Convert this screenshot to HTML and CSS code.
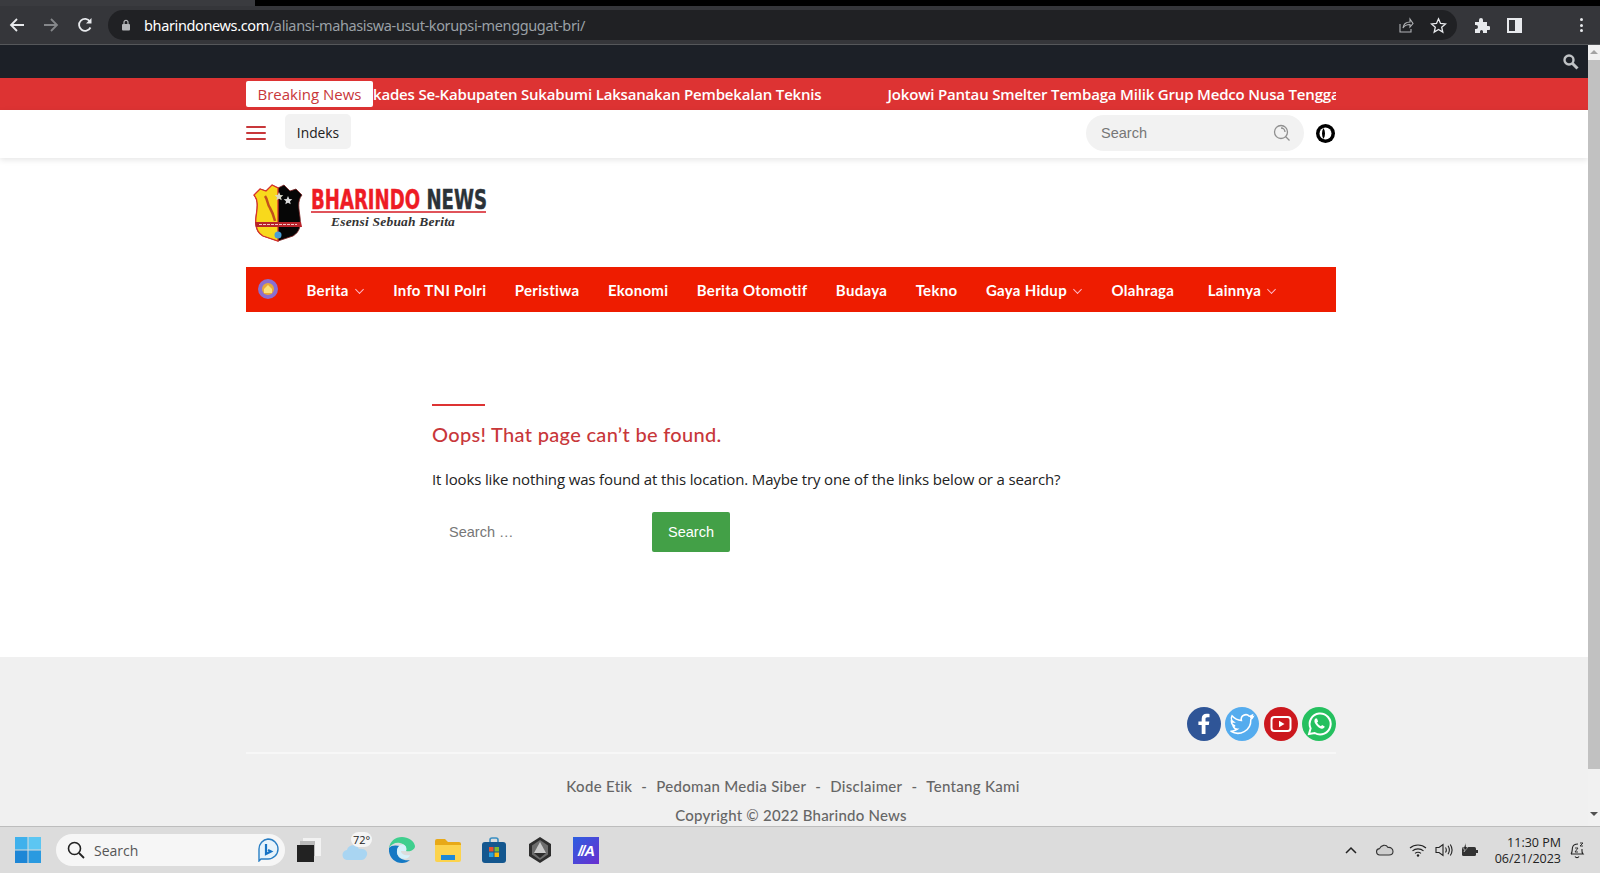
FILE: index.html
```html
<!DOCTYPE html>
<html lang="id">
<head>
    <meta charset="UTF-8">
    <meta name="viewport" content="width=device-width, initial-scale=1.0">
    <title>Bharindo News</title>
    <link rel="stylesheet" href="styles.css">
</head>
<body>
    <!-- browser -->
    <div class="tabstrip"><div class="tab-left"></div></div>
    <div class="toolbar">
        <svg class="tb-back" width="16" height="16" viewBox="0 0 16 16"><path d="M15 8H2M8 2 2 8l6 6" fill="none" stroke="#e8eaed" stroke-width="1.8"/></svg>
        <svg class="tb-fwd" width="16" height="16" viewBox="0 0 16 16"><path d="M1 8h13M8 2l6 6-6 6" fill="none" stroke="#85878a" stroke-width="1.8"/></svg>
        <svg class="tb-reload" width="16" height="16" viewBox="0 0 16 16"><path d="M13.5 10.5A6 6 0 1 1 13 4.5" fill="none" stroke="#e8eaed" stroke-width="1.8"/><path d="M14.5 1v5.5H9z" fill="#e8eaed"/></svg>
        <div class="omnibox">
            <svg width="10" height="12" viewBox="0 0 10 12"><path d="M3 5V3.400a2 2 0 0 1 4 0V5" fill="none" stroke="#b5b7ba" stroke-width="1.200"/><rect x="1" y="5" width="8" height="6.500" rx="1" fill="#b5b7ba"/></svg>
            <div class="url"><span class="url-host">bharindonews.com</span>/aliansi-mahasiswa-usut-korupsi-menggugat-bri/</div>
            <svg class="omni-share" width="17" height="17" viewBox="0 0 17 17"><path d="M3 7v8h11v-3M6 11c.5-4 3-6 7-6V2l3 4.500L13 10V7.500c-3 0-5.500 1-7 3.500z" fill="none" stroke="#b0b2b5" stroke-width="1.100"/></svg>
            <svg width="17" height="17" viewBox="0 0 17 17"><path d="m8.500 1.800 2 4.600 5 .5-3.800 3.300 1.100 4.900-4.300-2.600-4.300 2.600 1.100-4.900L1.500 6.900l5-.5z" fill="none" stroke="#e8eaed" stroke-width="1.300"/></svg>
        </div>
        <svg class="tb-puzzle" width="16" height="16" viewBox="0 0 16 16"><path d="M1 5h4V3a2 2 0 0 1 4 0v2h4v4h1.500a2 2 0 0 1 0 4H13v3H9v-1.500a1.500 1.500 0 0 0-3 0V16H1v-4h1a2 2 0 0 0 0-4H1z" fill="#e8eaed"/></svg>
        <div class="tb-panel"></div>
        <div class="tb-menu"><i></i><i></i><i></i></div>
    </div>

    <div class="viewport">
        <div class="page">
            <div class="topbar">
                <svg width="17" height="17" viewBox="0 0 17 17"><circle cx="7" cy="7" r="4.500" fill="none" stroke="#bfc2c5" stroke-width="2.400"/><path d="m10.500 10.500 5 5" stroke="#bfc2c5" stroke-width="3"/></svg>
            </div>

            <div class="ticker">
                <div class="container ticker-in">
                    <div class="ticker-label">Breaking News</div>
                    <div class="ticker-track">
                        <span class="ticker-item">kades Se-Kabupaten Sukabumi Laksanakan Pembekalan Teknis</span>
                        <span class="ticker-item">Jokowi Pantau Smelter Tembaga Milik Grup Medco Nusa Tengga</span>
                    </div>
                </div>
            </div>

            <div class="subhead">
                <div class="container subhead-in">
                    <div class="burger"><i></i><i></i><i></i></div>
                    <a class="indeks">Indeks</a>
                    <div class="head-search">
                        <span>Search</span>
                        <svg width="18" height="18" viewBox="0 0 18 18"><circle cx="8" cy="8" r="6.500" fill="none" stroke="#8f8f8f" stroke-width="1.300"/><path d="M8 4a4 4 0 0 1 4 4M12.500 12.500l4 4" fill="none" stroke="#8f8f8f" stroke-width="1.300"/></svg>
                    </div>
                    <svg class="contrast" width="19" height="19" viewBox="0 0 19 19"><circle cx="9.500" cy="9.500" r="9.500" fill="#000"/><circle cx="9.500" cy="9.500" r="6" fill="#fff"/><path d="M7.500 4C5.500 7 5.500 12 7.500 15 9.500 12 9.500 7 7.500 4z" fill="#000"/></svg>
                </div>
            </div>

            <div class="container brand">
                <svg width="50" height="58" viewBox="0 0 50 58">
                    <path d="M25 57 10 52C3 48 2 41 3 33 4 25 6 17 1 11L7 5l6 2 6-6 6 3 6-3 6 6 6-2 6 6c-5 6-3 14-2 22 1 8 0 15-7 19z" fill="#060606" stroke="#7a1f1f" stroke-width=".8"/>
                    <path d="M25 4v53L10 52C3 48 2 41 3 33 4 25 6 17 1 11L7 5l6 2 6-6z" fill="#f8d91c" stroke="#d8322c" stroke-width="1.300"/>
                    <path d="M12 12c3 4 2 8 5 12 3 5 4 9 5 13" fill="none" stroke="#c3501c" stroke-width="2.500"/>
                    <path d="m26 8 1.300 3 3 .3-2.300 2 .7 3-2.700-1.600-2.700 1.600.7-3-2.300-2 3-.3z" fill="#d9d9c8"/>
                    <path d="m35 12 1.300 3 3 .3-2.300 2 .7 3-2.700-1.600-2.700 1.600.7-3-2.300-2 3-.3z" fill="#ddd"/>
                    <path d="M2 38h46l1 5H3z" fill="#b8232a"/>
                    <path d="M6 40.500h38" stroke="#f3c6c6" stroke-width="1.200" stroke-dasharray="3 1"/>
                    <circle cx="25" cy="51" r="3.500" fill="#4a9ed6"/>
                </svg>
                <div class="brand-text">
                    <div class="brand-name"><span class="brand-inner"><span class="brand-red">BHARINDO</span> NEWS</span></div>
                    <div class="brand-tag">Esensi Sebuah Berita</div>
                </div>
            </div>

            <nav class="container mainnav">
                <svg class="nav-home" width="20" height="20" viewBox="0 0 20 20"><circle cx="10" cy="10" r="10" fill="#8a6fd0"/><circle cx="10" cy="10" r="6" fill="#e9a93a"/><path d="M6 10l4-4 4 4v4H6z" fill="#fbe27a"/></svg>
                <a>Berita <b class="caret"></b></a>
                <a>Info TNI Polri</a>
                <a>Peristiwa</a>
                <a>Ekonomi</a>
                <a>Berita Otomotif</a>
                <a>Budaya</a>
                <a>Tekno</a>
                <a>Gaya Hidup <b class="caret"></b></a>
                <a>Olahraga</a>
                <a class="nav-last">Lainnya <b class="caret"></b></a>
            </nav>

            <main class="notfound">
                <div class="rule"></div>
                <h1>Oops! That page can’t be found.</h1>
                <p>It looks like nothing was found at this location. Maybe try one of the links below or a search?</p>
                <form class="search-form">
                    <input type="text" placeholder="Search …">
                    <button type="button">Search</button>
                </form>
            </main>

            <footer class="footer">
                <div class="container">
                    <div class="socials">
                        <a class="soc fb"><svg width="34" height="34" viewBox="0 0 34 34"><path d="M18.500 27V18h3.300l.5-3.600h-3.800V12c0-1.100.5-1.800 2-1.800h2V7c-.6-.1-1.700-.2-2.900-.2-3 0-4.900 1.800-4.900 5v2.600H11.400V18h3.300v9z" fill="#fff"/></svg></a>
                        <a class="soc tw"><svg width="34" height="34" viewBox="0 0 34 34"><path d="M28 10c-1 .5-1.800.6-2.700.7 1-.6 1.700-1.400 2-2.500-.9.500-1.900 1-3 1.100a4.600 4.600 0 0 0-7.900 4.200C12.600 13.300 9.300 11.500 7 8.800c-1.200 2.100-.6 4.800 1.400 6.100-.7 0-1.400-.2-2-.6 0 2.200 1.500 4.100 3.700 4.600-.7.200-1.400.2-2 .1.600 1.800 2.300 3.100 4.300 3.200-2 1.500-4.300 2.200-6.800 1.900 8.900 5.600 20.700-.3 20.200-11.600.9-.7 1.700-1.500 2.200-2.500z" fill="none" stroke="#fff" stroke-width="1.500"/></svg></a>
                        <a class="soc yt"><svg width="34" height="34" viewBox="0 0 34 34"><rect x="7.500" y="10" width="19" height="14" rx="3" fill="none" stroke="#fff" stroke-width="2"/><path d="m15 13.800 5.500 3.200-5.500 3.200z" fill="#fff"/></svg></a>
                        <a class="soc wa"><svg width="34" height="34" viewBox="0 0 34 34"><path d="M7 27l1.600-5.600A10.500 10.500 0 1 1 12.700 26z" fill="none" stroke="#fff" stroke-width="2"/><path d="M13.500 11.500c-1.500 1.300-1.500 3.300 0 5.500 1.700 2.600 4 4.300 6.200 4.700 1.500.2 2.800-.8 3-2.200l-2.600-1.400-1.200 1.200c-1.700-.6-3-2-3.800-3.700l1-1.200-1.100-2.800z" fill="#fff"/></svg></a>
                    </div>
                    <div class="foot-links">
                        <a>Kode Etik</a><span>-</span><a>Pedoman Media Siber</a><span>-</span><a>Disclaimer</a><span>-</span><a>Tentang Kami</a>
                    </div>
                    <div class="copyright">Copyright © 2022 Bharindo News</div>
                </div>
            </footer>
        </div>
        <div class="scrollbar">
            <div class="sb-up"></div>
            <div class="sb-thumb"></div>
            <div class="sb-down"></div>
        </div>
    </div>

    <!-- taskbar -->
    <div class="taskbar">
        <svg class="win" width="26" height="26" viewBox="0 0 26 26"><rect width="12.500" height="12.500" fill="#3fb1ec"/><rect x="13.500" width="12.500" height="12.500" fill="#5cc6f2"/><rect y="13.500" width="12.500" height="12.500" fill="#1d86d6"/><rect x="13.500" y="13.500" width="12.500" height="12.500" fill="#2a9ae0"/></svg>
        <div class="task-search">
            <svg width="18" height="18" viewBox="0 0 18 18"><circle cx="7.500" cy="7.500" r="6" fill="none" stroke="#222" stroke-width="1.600"/><path d="m12 12 5 5" stroke="#222" stroke-width="1.800"/></svg>
            <span>Search</span>
            <svg class="bing" width="22" height="24" viewBox="0 0 22 24"><path d="M11 1a10 10 0 0 1 0 20H4l-2 2V11A10 10 0 0 1 11 1z" fill="#e6f3fb" stroke="#2a7fc4" stroke-width="1.400"/><path d="M9 6v10l5-2.500-3-1.500" fill="none" stroke="#1773c4" stroke-width="2.200"/></svg>
        </div>
        <div class="task-apps">
            <svg width="24" height="24" viewBox="0 0 24 24"><rect x="6" width="18" height="18" fill="#f2f2f2"/><rect x="3" y="3" width="15" height="15" fill="#bbb"/><rect y="7" width="17" height="17" fill="#222"/></svg>
            <div class="weather">
                <svg width="28" height="22" viewBox="0 0 28 22"><path d="M6 20a5 5 0 0 1-1-10c1-5 9-7 12-1 6-1 9 3 8 6-1 3-3 5-6 5z" fill="#a9d5f2"/></svg>
                <span class="temp">72°</span>
            </div>
            <svg width="26" height="26" viewBox="0 0 26 26"><path d="M13 0C6 0 1 4.500 0 11c2-4 7-6 11-5 5 1 7 5 6 8 4 1 9-1 9-5C25 3.500 19 0 13 0z" fill="#3fcf8e"/><path d="M0 11c-1 8 5 15 13 15 3 0 6-1 8-3-5 1-12-1-13-7-.5-3 1-6 3-7C7 8 2 8 0 11z" fill="#1479c4"/><path d="M8 14c0-4 3-7 6-6.500 3 .5 4 4 3 6.500h-5c0 3 4 5 9 4-1 5-13 6-13-4z" fill="#d7f2fb"/></svg>
            <svg width="26" height="24" viewBox="0 0 26 24"><path d="M0 3a2 2 0 0 1 2-2h8l3 3h11a2 2 0 0 1 2 2v2H0z" fill="#e8a917"/><path d="M0 7h26v15a2 2 0 0 1-2 2H2a2 2 0 0 1-2-2z" fill="#fcd34d"/><rect x="6" y="17" width="14" height="5" fill="#1e88d6"/></svg>
            <svg width="24" height="26" viewBox="0 0 24 26"><path d="M8 5V3a2 2 0 0 1 2-2h4a2 2 0 0 1 2 2v2" fill="none" stroke="#3a8fc2" stroke-width="1.600"/><rect y="5" width="24" height="21" rx="3" fill="#14578f"/><rect x="7" y="10" width="4.500" height="4.500" fill="#e8502f"/><rect x="12.500" y="10" width="4.500" height="4.500" fill="#7db832"/><rect x="7" y="15.500" width="4.500" height="4.500" fill="#27a0e0"/><rect x="12.500" y="15.500" width="4.500" height="4.500" fill="#fbbc09"/></svg>
            <svg width="24" height="26" viewBox="0 0 24 26"><path d="M12 0 23 7v12l-11 7L1 19V7z" fill="#2e2e2e"/><path d="M12 3 20 8.500v9L12 23l-8-5.500v-9z" fill="#6c6c6c"/><path d="M12 5l6 11H6z" fill="#c9c9c9"/><path d="M6 16h12l-6 5z" fill="#2c2c2c"/></svg>
            <div class="app-ma"><i>//A</i></div>
        </div>
        <div class="tray">
            <svg class="t-caret" width="12" height="8" viewBox="0 0 12 8"><path d="m1 7 5-5 5 5" fill="none" stroke="#222" stroke-width="1.500"/></svg>
            <svg class="t-cloud" width="18" height="12" viewBox="0 0 18 12"><path d="M4 11a3.200 3.200 0 0 1-.5-6.400C5 1 10 0 12 3.500c3-.5 5 1.500 5 4s-2 3.500-4 3.500z" fill="#cfcfcf" stroke="#333" stroke-width="1.100"/></svg>
            <svg class="t-wifi" width="18" height="14" viewBox="0 0 18 14"><path d="M1 5c4.500-4 11.500-4 16 0M3.500 7.800c3-2.600 8-2.600 11 0M6 10.400c1.800-1.400 4.200-1.400 6 0" fill="none" stroke="#222" stroke-width="1.100"/><circle cx="9" cy="12.500" r="1.200" fill="#222"/></svg>
            <svg class="t-sound" width="18" height="14" viewBox="0 0 18 14"><path d="M1 4.500h3L8 1.500v11L4 9.500H1z" fill="none" stroke="#222" stroke-width="1.100"/><path d="M10.500 4.500c1 1.500 1 3.500 0 5M13 2.800c1.700 2.600 1.700 5.800 0 8.400M15.300 1.500c2.200 3.400 2.200 7.600 0 11" fill="none" stroke="#222" stroke-width="1.100"/></svg>
            <svg class="t-batt" width="18" height="14" viewBox="0 0 18 14"><rect x="1" y="4" width="14" height="9" rx="1.500" fill="#333"/><rect x="15" y="7" width="2" height="3" fill="#333"/><path d="M5 0 2 6h2L3 9l4-5H5z" fill="#222" stroke="#dcdcdc" stroke-width=".5"/></svg>
            <div class="clock"><div>11:30 PM</div><div>06/21/2023</div></div>
            <svg class="t-bell" width="16" height="18" viewBox="0 0 16 18"><path d="M2 13c1.500-1.500 1-4 1.500-6.500C4 4 6 3 9 3" fill="none" stroke="#222" stroke-width="1.100"/><path d="M2 13h12c-1.500-1.500-1-3-1-5M6 15.500c1 1.500 3 1.500 4 0" fill="none" stroke="#222" stroke-width="1.100"/><path d="M6 7h3L6 11h3M11 2h3l-3 3h3" fill="none" stroke="#222" stroke-width=".9"/></svg>
        </div>
    </div>
</body>
</html>
```

FILE: styles.css
```css
* { box-sizing: border-box; }
html, body { margin: 0; height: 873px; overflow: hidden; }
body { font-family: "Open Sans", sans-serif; display: flex; flex-direction: column; background: #fff; }
a { color: inherit; text-decoration: none; }

/* browser chrome */
.tabstrip { height: 6px; background: #000; }
.tab-left { width: 255px; height: 6px; background: #3a3b3f; }
.toolbar { height: 39px; background: #35363a; border-bottom: 1px solid #55575a; display: flex; align-items: center; padding: 0 12px 0 9px; flex: none; }
.tb-back { margin-right: 18px; }
.tb-fwd { margin-right: 18px; }
.omnibox { margin-left: 15px; width: 1349px; height: 30px; border-radius: 15px; background: #202124; display: flex; align-items: center; padding: 0 10px 0 13px; }
.url { margin-left: 13px; flex: 1; font-family: "Noto Sans", sans-serif; font-size: 14.5px; line-height: 18px; margin-top: -1px; color: #9aa0a6; letter-spacing: -.37px; }
.url-host { color: #fff; }
.omni-share { margin-right: 16px; }
.tb-puzzle { margin-left: 17px; }
.tb-panel { margin-left: 17px; width: 15px; height: 15px; border: 2px solid #e8eaed; border-right-width: 7px; }
.tb-menu { margin-left: 58px; display: flex; flex-direction: column; gap: 2.500px; }
.tb-menu i { width: 3px; height: 3px; border-radius: 50%; background: #e8eaed; }

/* page */
.viewport { flex: 1; display: flex; min-height: 0; }
.page { flex: 1; min-width: 0; overflow: hidden; display: flex; flex-direction: column; }
.container { width: 1090px; margin-left: 246px; }
.scrollbar { width: 12px; flex: none; background: #f1f1f1; display: flex; flex-direction: column; align-items: center; }
.sb-up { margin: 5px 0 6px; border: 4px solid transparent; border-bottom-color: #a3a3a3; border-top-width: 0; }
.sb-thumb { width: 100%; height: 709px; background: #c1c1c1; }
.sb-down { margin-top: 43px; border: 4px solid transparent; border-top-color: #505050; border-bottom-width: 0; }

.topbar { height: 33px; flex: none; background: #1c2027; display: flex; justify-content: flex-end; align-items: center; padding: 0 9px 0 0; }
.ticker { height: 32px; flex: none; background: #dd3333; }
.ticker-in { height: 100%; display: flex; align-items: center; }
.ticker-label { flex: none; width: 127px; height: 26px; background: #fff; color: #c8373a; border-radius: 2px; font-size: 15px; line-height: 26px; text-align: center; }
.ticker-track { flex: 1; min-width: 0; overflow: hidden; white-space: nowrap; color: #fff; font-size: 15px; font-weight: 600; letter-spacing: -.18px; display: flex; gap: 66px; }

.subhead { height: 48px; flex: none; background: #fff; box-shadow: 0 2px 6px rgba(0,0,0,.1); position: relative; }
.subhead-in { height: 100%; display: flex; align-items: center; }
.burger { width: 20px; margin-top: -2px; display: flex; flex-direction: column; gap: 4px; }
.burger i { height: 2px; background: #c8373a; border-radius: 1px; }
.indeks { margin-left: 19px; width: 66px; height: 35px; margin-top: -6px; background: #f2f2f2; border-radius: 5px; font-size: 13.8px; color: #222; line-height: 37px; text-align: center; }
.head-search { margin-left: auto; width: 218px; height: 36px; margin-top: -2px; border-radius: 18px; background: #f2f2f2; display: flex; align-items: center; justify-content: space-between; padding: 0 13px 0 15px; font-family: "Liberation Sans", sans-serif; font-size: 14.5px; color: #777; }
.contrast { margin-left: 12px; margin-right: 1px; margin-top: -2px; }

.brand { display: flex; padding: 26px 0 0 7px; height: 109px; flex: none; }
.brand-text { margin-left: 8px; padding-top: 4px; }
.brand-name { width: 175px; height: 25px; border-bottom: 2px solid #e0535a; font-family: "DejaVu Sans", sans-serif; font-weight: 700; font-size: 27px; line-height: 23px; color: #2b3238; white-space: nowrap; }
.brand-inner { display: inline-block; transform: scaleX(.67); transform-origin: left center; -webkit-text-stroke: .5px currentColor; }
.brand-red { color: #ee1c24; }
.brand-tag { margin: 1px 0 0 20px; font-family: "Liberation Serif", serif; font-style: italic; font-weight: 700; font-size: 13.5px; color: #333; letter-spacing: .2px; }

.mainnav { height: 45px; flex: none; background: #ee1c00; display: flex; align-items: center; gap: 28.500px; padding-left: 12px; color: #fff; font-family: Lato, sans-serif; font-size: 15px; font-weight: 700; letter-spacing: .3px; }
.nav-home { margin: -2px 0 0 0; }
.nav-last { margin-left: 5px; }
.caret { display: inline-block; width: 7px; height: 7px; margin: 0 2px 3px 3px; border-right: 1px solid #fbc; border-bottom: 1px solid #fbc; transform: rotate(45deg) scale(.9); }

.notfound { flex: 1; padding: 92px 0 0 432px; }
.rule { width: 53px; height: 2px; background: #dd3333; }
.notfound h1 { margin: 15px 0 0; font-family: Lato, sans-serif; font-size: 20px; line-height: 26px; font-weight: 500; letter-spacing: .32px; color: #c8373a; }
.notfound p { margin: 20px 0 0; font-size: 15px; line-height: 24px; letter-spacing: -.14px; color: #222; }
.search-form { margin-top: 21px; display: flex; }
.search-form input { width: 220px; height: 40px; border: 0; padding: 0 17px; font-family: "Liberation Sans", sans-serif; font-size: 14.5px; background: transparent; outline: 0; }
.search-form input::placeholder { color: #777; }
.search-form button { width: 78px; height: 40px; border: 0; border-radius: 2px; background: #43a047; color: #fff; font-family: "Liberation Sans", sans-serif; font-size: 14.5px; }

.footer { height: 169px; flex: none; background: #f0f0f0; color: #666; font-family: Lato, sans-serif; font-size: 15px; font-weight: 500; text-align: center; }
.socials { display: flex; justify-content: flex-end; gap: 4.500px; padding: 50px 0 11px; border-bottom: 2px solid #f7f7f7; }
.soc { width: 34px; height: 34px; border-radius: 50%; display: block; }
.fb { background: #2f5597; }
.tw { background: #55acee; }
.yt { background: #cc181e; }
.wa { background: #25c05f; }
.foot-links { margin-top: 22px; display: flex; justify-content: center; gap: 9px; line-height: 20px; letter-spacing: .3px; padding-left: 4px; }
.copyright { margin-top: 9px; line-height: 20px; letter-spacing: .22px; }

/* taskbar */
.taskbar { height: 47px; flex: none; background: #dcdcdc; border-top: 1px solid #bdbdbd; display: flex; align-items: center; padding-left: 15px; }
.task-search { margin-left: 15px; width: 229px; height: 32px; background: #f6f6f6; border-radius: 16px; display: flex; align-items: center; padding: 0 6px 0 11px; font-size: 14px; color: #555; }
.task-search span { margin-left: 9px; flex: 1; }
.task-apps { margin-left: 1px; display: grid; grid-template-columns: 46px 47px repeat(5, 46px); justify-items: center; align-items: center; }
.weather { position: relative; width: 30px; height: 24px; margin-left: 3px; display: flex; align-items: flex-end; }
.temp { position: absolute; top: -6px; left: 9px; padding: 0 2px; background: #f5f5f5; border-radius: 8px; font-size: 11px; color: #222; }
.app-ma { width: 26px; height: 27px; background: linear-gradient(135deg, #2c5fe0, #6a2fd0); color: #fff; font: italic 700 15px/27px "Liberation Sans", sans-serif; letter-spacing: -1px; text-align: center; }
.tray { margin-left: auto; display: flex; align-items: center; width: 248px; height: 100%; margin-right: 7px; }
.tray svg { flex: none; }
.t-cloud { margin-left: 19px; }
.t-wifi { margin-left: 15px; }
.t-sound { margin-left: 8px; }
.t-batt { margin-left: 8px; }
.clock { width: 82px; margin-top: 2px; text-align: right; font-size: 12.5px; line-height: 16px; color: #222; }
.t-bell { margin-left: 8px; }
```
